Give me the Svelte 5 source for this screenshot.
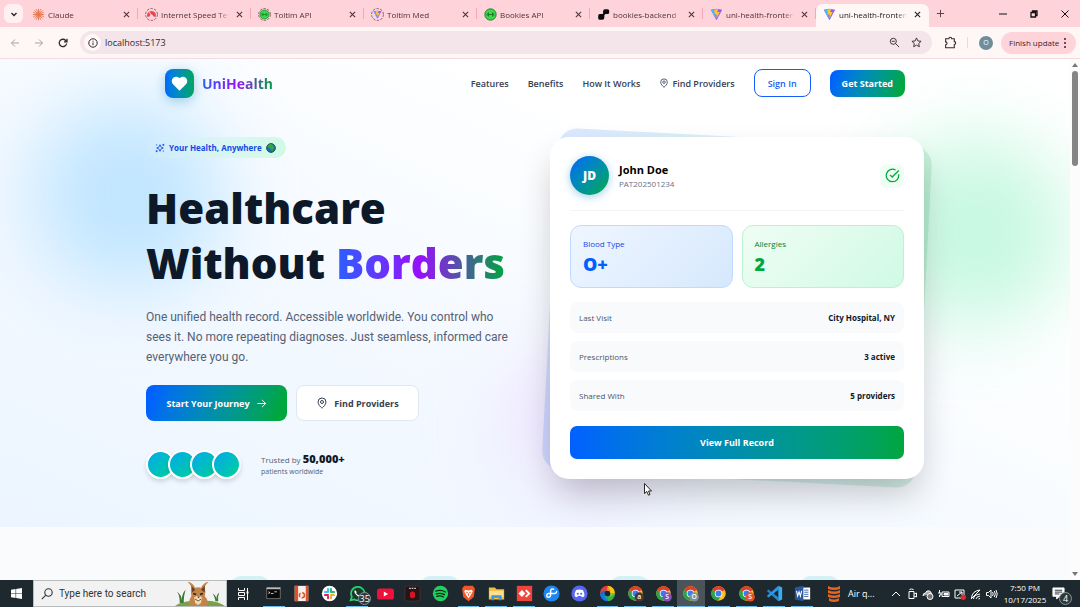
<script>
  const vite = '<path d="M1 2 8 1l7 1-7 13z" fill="#8d5cf6"/><path d="M1 2 8 15 5 2z" fill="#45b8fb"/><path d="M5 2l5-1-1 4h3l-4 8 0-5H6z" fill="#ffc531"/>';
  const ring = '<circle cx="8" cy="8" r="7.3" fill="none" stroke="#6d4a50" stroke-width="1" stroke-dasharray="3 1.6"/>';
  const bookies = '<circle cx="8" cy="8" r="7" fill="#39d94a" stroke="#1c6b2c" stroke-width="1"/><path d="M5.500 5.500v5M4 6.500v3M10.500 5.500v5M12 6.500v3M5.500 8h5" stroke="#174f22" stroke-width=".8"/>';
  const tabs = [
    { title: 'Claude', icon: '<path d="M8 1v14M1 8h14M3 3l10 10M13 3 3 13M5.3 1.5l5.4 13M1.5 5.3l13 5.4M14.5 5.3l-13 5.4M10.7 1.5l-5.4 13" stroke="#e5764f" stroke-width="1.1"/>' },
    { title: 'Internet Speed Test', icon: ring + '<path d="M3 11a5.400 5.400 0 1 1 10 0l-3-1a2 2 0 0 0-4 0z" fill="#ee4450"/><path d="M8 10 5.500 5" stroke="#fff" stroke-width="1"/>' },
    { title: 'Toltim API', icon: ring + '<g transform="translate(1.6 1.6) scale(.8)">' + bookies + '</g>' },
    { title: 'Toltim Med', icon: ring + '<g transform="translate(2.4 2.6) scale(.7)">' + vite + '</g>' },
    { title: 'Bookies API', icon: bookies },
    { title: 'bookies-backend', icon: '<path d="M1.500 9.500q0-2 2-2H6q1.500 0 1.500-1.500V4q0-2.500 2.500-2.500h3q2 0 2 2v2q0 2-2 2h-2q-2 0-2 2V12q0 2.500-2.500 2.500h-3q-2 0-2-2z" fill="#0b0b0d"/>' },
    { title: 'uni-health-frontend', icon: vite },
    { title: 'uni-health-frontend', icon: vite, active: true }
  ];

  const chrome = (color, letter) =>
    '<circle cx="10" cy="10" r="8.500" fill="#fbc116"/><path d="M10 10 2.600 5.800A8.500 8.500 0 0 1 17.400 5.800z" fill="#e33b2e"/><path d="M10 10 2.600 5.800A8.500 8.500 0 0 0 9.500 18.500L13 12z" fill="#2ba24c"/><circle cx="10" cy="10" r="4.400" fill="#fff"/><circle cx="10" cy="10" r="3.500" fill="#3b7ded"/>' +
    (letter ? `<circle cx="14.400" cy="14" r="5.400" fill="${color}"/><text x="14.400" y="16.700" font-size="8" font-weight="600" fill="#fff" text-anchor="middle">${letter}</text>` : '');

  const apps = [
    { name: 'Terminal', open: true, icon: '<path d="M2 3h16v13H2z" fill="#0a0a0a" stroke="#777"/><path d="M2 3h16v2H2z" fill="#bbb"/><path d="M4 8l2 1-2 1M7 10h3M11 8h3" stroke="#ddd" fill="none"/>' },
    { name: 'Presenter', icon: '<path d="M2 1h16v18H2z" fill="#f7efe9"/><path d="M2 1h4v18H2zM15 1h3v18h-3z" fill="#d9532c"/><circle cx="10.500" cy="12" r="3" fill="none" stroke="#d9532c" stroke-width="1.800" stroke-dasharray="5 2"/>' },
    { name: 'Slack', icon: '<circle cx="10" cy="10" r="9" fill="#fff"/><g stroke-width="2.4" stroke-linecap="round"><path d="M8.3 4.7v3.6M4.7 8.3h2" stroke="#36c5f0"/><path d="M11.7 4.7v3.6M13.4 8.3h2" stroke="#2eb67d"/><path d="M11.7 11.7h3.6M11.7 13.7v2" stroke="#ecb22e"/><path d="M4.7 11.7h3.6M8.3 13.5v2" stroke="#e01e5a"/></g>' },
    { name: 'WhatsApp', open: true, icon: '<path d="M2 18l1.3-4.2A8 8 0 1 1 6.3 17z" fill="#173b2c" stroke="#2bd36a" stroke-width="2"/><path d="M7 6q-2 3 2 6 3 3 5 1l-1.6-1.6-1.4.8-2.6-2.6.6-1.4z" fill="#fff"/>', badge: '35' },
    { name: 'YouTube', icon: '<rect x="0" y="4" width="20" height="13" rx="3" fill="#f0103c"/><path d="M8 7.500v6l5-3z" fill="#fff"/>' },
    { name: 'Recorder', icon: '<rect x="1" y="1" width="18" height="18" rx="3" fill="#241517" stroke="#4b3336"/><path d="M7 9q3-3 6 0v5q-3 3-6 0z" fill="#d51523"/><path d="M6 4h8" stroke="#d4c8c8" stroke-width="1.400" stroke-dasharray="2 1"/>' },
    { name: 'Spotify', icon: '<circle cx="10" cy="10" r="9" fill="#1fd15e"/><path d="M4.5 7.2q6-2 11.3 1M5 10.4q5-1.6 9.6 1M5.8 13.3q4-1.2 7.6.8" fill="none" stroke="#0d2415" stroke-width="1.6" stroke-linecap="round"/>' },
    { name: 'Brave', open: true, icon: '<path d="M5 1h10l2.500 3-1.300 10L10 19l-6.200-5L2.500 4z" fill="#f4552a"/><path d="M6 5.500l4 1 4-1 1 2-2 4-3 4-3-4-2-4z" fill="#fff"/><path d="M7.500 8.500l1.500.8M12.500 8.500 11 9.300M10 10v2.500" stroke="#f4552a" stroke-width="1.300"/>' },
    { name: 'File Explorer', open: true, icon: '<path d="M1 3h7l2 2h9v12H1z" fill="#f3bd45"/><path d="M2 7h16v7H2z" fill="#ffe08c"/><path d="M4 18v-6h12v6h-3v-3H7v3z" fill="#3c97dd"/>' },
    { name: 'AnyDesk', open: true, icon: '<path d="M1 1h18v18H1z" fill="#ef443b"/><path d="M7 6l4 4-4 4-4-4z" fill="#fff"/><path d="M11.500 6l4 4-4 4" fill="none" stroke="#fff" stroke-width="2.200"/>' },
    { name: 'Notes', icon: '<circle cx="10" cy="10" r="9.500" fill="#1d86f0"/><path d="M12.500 5q-3.500-1.500-3.500 2v4q0 3.500-2.500 3.500t-2-2.500 2.500-2h7q2-.5 2-2.500" fill="none" stroke="#fff" stroke-width="1.700" stroke-linecap="round"/>' },
    { name: 'Discord', icon: '<circle cx="10" cy="10" r="9.500" fill="#5865f2"/><path d="M6 6q4-1.500 8 0 2 3 1.800 7-1.500 1.500-3 1.500l-.8-1.500H8l-.8 1.500q-1.500 0-3-1.500Q4 9 6 6z" fill="#fff"/><circle cx="8" cy="10.300" r="1.300" fill="#5865f2"/><circle cx="12" cy="10.300" r="1.300" fill="#5865f2"/>' },
    { name: 'Photos', open: true, icon: '<path d="M10 1a9 9 0 0 1 9 9h-6z" fill="#f8c51d"/><path d="M19 10a9 9 0 0 1-9 9v-6z" fill="#37b24a"/><path d="M10 19a9 9 0 0 1-9-9h6z" fill="#1d74d8"/><path d="M1 10a9 9 0 0 1 9-9v6z" fill="#e43f30"/><path d="M10 1l4 6-5 1z" fill="#f59322"/><path d="M19 10l-6 4v-5z" fill="#8ac63f"/><path d="M10 19l-4-6 5-1z" fill="#1aa7a0"/><path d="M1 10l6-4v5z" fill="#2f62c9"/><circle cx="10" cy="10" r="3.200" fill="#18262b"/>' },
    { name: 'Chrome profile a', open: true, icon: chrome('#4d3631', 'a') },
    { name: 'Chrome profile S', open: true, icon: chrome('#7e51bd', 'S') },
    { name: 'Chrome profile O', open: true, current: true, icon: chrome('#78909c', 'O') },
    { name: 'Chrome', open: true, icon: chrome('', '') },
    { name: 'Chrome second profile S', open: true, icon: chrome('#ef5022', 'S') },
    { name: 'Visual Studio Code', open: true, icon: '<path d="M14.500 1v18L1 7l2-1.700 11.500 9z" fill="#1f86cf"/><path d="M14.500 1v4.700L3 14.700 1 13z" fill="#2a9ae6"/><path d="M14.500 1 19 3v14l-4.500 2z" fill="#37aef2"/>' },
    { name: 'Word', open: true, icon: '<path d="M10 3h9v14h-9z" fill="#fff"/><path d="M12 6h5M12 8.500h5M12 11h5M12 13.500h5" stroke="#2b579a"/><path d="M1 3l10-2v18L1 17z" fill="#2b579a"/><path d="M3 7l1.300 6L6 8l1.500 5L9 7" stroke="#fff" stroke-width="1.300" fill="none"/>' }
  ];

  const links = ['Features', 'Benefits', 'How It Works'];
  const records = [
    ['Last Visit', 'City Hospital, NY'],
    ['Prescriptions', '3 active'],
    ['Shared With', '5 providers']
  ];
</script>

{#snippet pin()}
  <svg class="pin" viewBox="0 0 24 24"><path d="M20 10c0 5-5.500 10.200-7.400 11.800a1 1 0 0 1-1.200 0C9.500 20.200 4 15 4 10a8 8 0 0 1 16 0z" /><circle cx="12" cy="10" r="3" /></svg>
{/snippet}

{#snippet cross()}
  <svg class="cross" viewBox="0 0 8 8"><path d="M1 1l6 6M7 1 1 7" /></svg>
{/snippet}

<div class="desktop">
  <div class="tabstrip">
    <button class="tab-search" aria-label="Search tabs"><svg viewBox="0 0 8 8"><path d="M1.500 3 4 5.500 6.500 3" /></svg></button>
    <div class="tabs">
      {#each tabs as tab}
        <div class="tab" class:active={tab.active}>
          <svg class="favicon" viewBox="0 0 16 16">{@html tab.icon}</svg>
          <span class="tab-title">{tab.title}</span>
          <button class="plain" aria-label="Close tab">{@render cross()}</button>
        </div>
      {/each}
    </div>
    <button class="plain new-tab" aria-label="New tab"><svg viewBox="0 0 10 10"><path d="M5 1v8M1 5h8" /></svg></button>
    <div class="window-controls">
      <button class="plain" aria-label="Minimize"><svg viewBox="0 0 8 8"><path d="M0 4h8" /></svg></button>
      <button class="plain" aria-label="Restore"><svg viewBox="0 0 8 8"><path d="M1 2.500h4.500V7H1zM2.500 2V1H7v4.500H6" stroke-width="1.300" /></svg></button>
      <button class="plain" aria-label="Close"><svg viewBox="0 0 8 8"><path d="M.5.5l7 7M7.500.5l-7 7" /></svg></button>
    </div>
  </div>

  <div class="toolbar">
    <button class="plain faded" aria-label="Back"><svg viewBox="0 0 10 10"><path d="M9 5H1.500M5 1.500 1.500 5 5 8.500" /></svg></button>
    <button class="plain faded" aria-label="Forward"><svg viewBox="0 0 10 10"><path d="M1 5h7.500M5 1.500 8.500 5 5 8.500" /></svg></button>
    <button class="plain" aria-label="Reload"><svg viewBox="0 0 10 10"><path d="M8.600 5.500A3.700 3.700 0 1 1 7.700 2.500L9 3.700M9 .8v3H6" stroke-width="1.300" /></svg></button>
    <div class="omnibox">
      <span class="site-info"><svg viewBox="0 0 10 10"><circle cx="5" cy="5" r="4.200" /><path d="M5 4.500v2.700M5 2.700v1" /></svg></span>
      <input aria-label="Address" value="localhost:5173" />
      <svg class="tool" viewBox="0 0 12 12"><circle cx="4.700" cy="4.700" r="3.300" /><path d="M7.200 7.200 11 11M3 4.700h3.400" /></svg>
      <svg class="tool" viewBox="0 0 12 12"><path d="M6 1l1.500 3.300 3.500.4-2.600 2.400.7 3.500L6 8.900l-3.100 1.700.7-3.500L1 4.700l3.500-.4z" /></svg>
    </div>
    <button class="plain ext" aria-label="Extensions"><svg viewBox="0 0 12 12"><path d="M1.500 2.500h3a1.300 1.300 0 0 1 2.600 0h2.400v2.700a1.300 1.300 0 0 1 0 2.600v3h-8V8a1.200 1.200 0 0 0 0-2.600z" /></svg></button>
    <span class="split"></span>
    <button class="profile">O</button>
    <button class="update">Finish update <i></i></button>
  </div>

  <div class="viewport">
    <main>
      <section class="hero">
        <div class="blob sky"></div>
        <div class="blob mint"></div>
        <div class="blob violet"></div>
        <nav>
          <a class="brand" href="#home">
            <span class="logo"><svg viewBox="0 0 24 24"><path d="M12 21 3.500 12.600A5.500 5.500 0 0 1 12 5.500a5.500 5.500 0 0 1 8.500 7.100z" /></svg></span>
            <span class="gradient-text">UniHealth</span>
          </a>
          <div class="links">
            {#each links as link}<a href="#top">{link}</a>{/each}
            <a href="#providers">{@render pin()}Find Providers</a>
            <button class="sign-in">Sign In</button>
            <button class="get-started">Get Started</button>
          </div>
        </nav>

        <div class="columns">
          <div class="pitch">
            <div class="pill">
              <svg class="spark" viewBox="0 0 24 24"><path d="M12 4q.7 7.300 8 8-7.300.7-8 8-.7-7.300-8-8 7.300-.7 8-8zM20 2v5M17.500 4.500h5M4 17v5M1.500 19.500h5M4 3v3M20 18v3" /></svg>
              <span>Your Health, Anywhere</span>
              <svg class="globe" viewBox="0 0 12 12"><circle cx="6" cy="6" r="5.300" fill="#1675a8" stroke="#163b4f" /><path d="M3 2q3-1.500 5 0l1 2 1.500 1-2 2L8 10 6 8 5 6H3L2 4z" fill="#37a63d" /></svg>
            </div>
            <h1>Healthcare<br />Without <span class="gradient-text">Borders</span></h1>
            <p class="lead">One unified health record. Accessible worldwide. You control who sees it. No more repeating diagnoses. Just seamless, informed care everywhere you go.</p>
            <div class="actions">
              <button class="primary">Start Your Journey <svg viewBox="0 0 24 24"><path d="M3 12h18M13 4l8 8-8 8" /></svg></button>
              <button class="secondary">{@render pin()}Find Providers</button>
            </div>
            <div class="trust">
              <div class="people"><i></i><i></i><i></i><i></i></div>
              <div>
                <div class="trusted">Trusted by <strong>50,000+</strong></div>
                <div class="small">patients worldwide</div>
              </div>
            </div>
          </div>

          <div class="card-wrap">
            <div class="card-back"></div>
            <article class="card">
              <header>
                <span class="initials">JD</span>
                <div class="who">
                  <h2>John Doe</h2>
                  <div>PAT202501234</div>
                </div>
                <span class="verified"><svg viewBox="0 0 24 24"><path d="M21.800 10A10 10 0 1 1 17 3.300" /><path d="m8 11 3.500 3.500L22 4" /></svg></span>
              </header>
              <div class="stats">
                <div class="stat blue"><span>Blood Type</span><strong>O+</strong></div>
                <div class="stat green"><span>Allergies</span><strong>2</strong></div>
              </div>
              <dl>
                {#each records as [label, value]}
                  <div><dt>{label}</dt><dd>{value}</dd></div>
                {/each}
              </dl>
              <button class="full">View Full Record</button>
            </article>
          </div>
        </div>
      </section>
      <section class="numbers"><i></i><i></i><i></i><i></i></section>
    </main>
    <div class="scrollbar"><b class="up"></b><span></span><b class="down"></b></div>
  </div>

  <footer class="taskbar">
    <button class="start" aria-label="Start"><svg viewBox="0 0 12 12"><path d="M0 2l5-.8v4.500H0zM5.600 1.100 12 0v5.700H5.600zM0 6.300h5v4.500L0 10zM5.600 6.300H12V12l-6.400-1z" fill="#fff" /></svg></button>
    <label class="search">
      <svg class="lens" viewBox="0 0 12 12"><circle cx="7.500" cy="4.500" r="3.700" /><path d="M4.800 7.200.8 11.200" /></svg>
      <input placeholder="Type here to search" aria-label="Type here to search" />
      <svg class="caracal" viewBox="0 0 52 26">
        <path d="M0 26q8-6 24-5 18-2 28 5z" fill="#7da044" />
        <path d="M5 23q0-8-3-12 5 4 5 9 0-7 4-11-2 6-2 14zM42 21q-1-6-3-8 4 2 4 6 0-5 3-7-2 5-1 9z" fill="#3f7a39" />
        <path d="M15 26q-1-7 2-10-1-6 0-10-2-4-4-5 5 0 8 6 3-1 6 0 3-6 8-6-3 2-4 5 1 5 0 10 4 3 3 10z" fill="#c28449" />
        <path d="M17 5l4 4-3 3zM31 5l-4 4 4 3z" fill="#6b4026" />
        <path d="M20 17q4-3 8 0l-1 6-3 2-3-2z" fill="#f0d9b5" />
        <path d="M19 13l3 1M29 13l-3 1" stroke="#2f2119" stroke-width="1.500" /><path d="M23 16h3l-1.500 2z" fill="#643022" /><path d="M21 19q3.500 3 6 0" stroke="#69402b" fill="#fff" />
      </svg>
    </label>
    <button class="task-view" aria-label="Task view"><svg viewBox="0 0 12 12"><path d="M.5 0v2.500h6V0M.5 12V9.500h6V12M.5 4.500h6v3h-6zM9.500 0v12" /><path d="M8.500 4.500h2" stroke-width="2" /></svg></button>
    <div class="apps">
      {#each apps as app}
        <button class="app" class:open={app.open} class:current={app.current} aria-label={app.name}>
          <svg viewBox="0 0 20 20">{@html app.icon}</svg>
          {#if app.badge}<span class="badge">{app.badge}</span>{/if}
        </button>
      {/each}
    </div>
    <div class="tray">
      <svg class="air" viewBox="0 0 14 16"><path d="M1 0q6 3 12 0v3Q7 5 1 3zM1 4q6 3 12 0v3Q7 9 1 7zM1 8q6 3 12 0v3Q7 13 1 11zM2 12q5 3 10 0v3q-5 2-10 0z" fill="#e8641f" /></svg>
      <span class="air-text">Air q...</span>
      <svg viewBox="0 0 12 12"><path d="M2 8l4-4 4 4" /></svg>
      <svg viewBox="0 0 12 12"><path d="M3 3.500h5v7H3zM8 6l2.500-1v4L8 8M3.500 1.500q2-1 4 0" /></svg>
      <svg viewBox="0 0 12 12"><path d="M1 8q0-3 2.500-3 1-3 4-2 2 1 2 3" fill="#aaa" /><circle cx="8" cy="8.500" r="3" fill="#777" /></svg>
      <svg viewBox="0 0 12 12"><path d="M4 4h7v4.500H4zM1.500 2v3M0 5h3v2H1.500v2" /><path d="M6 5.500h4v1.500H6z" fill="#eee" /></svg>
      <svg viewBox="0 0 12 12"><path d="M1 2h9v8H1zM3 8l5-4M5 4h3v3" /><circle cx="9.300" cy="9.300" r="2.700" fill="#e8252c" stroke="none" /></svg>
      <svg viewBox="0 0 12 12"><path d="M1 11 10 2M3.500 11q0-4 6.500-5M6 11q0-2 4-3M1.500 10Q2 3 10 2M8.500 11l1.500-.5" /></svg>
      <svg viewBox="0 0 12 12"><path d="M.5 4.500h2L5 2v8L2.500 7.500h-2zM6.500 4q1.500 2 0 4M8.300 3q2 3 0 6M10 2q2.500 4 0 8" /></svg>
      <div class="clock"><span>7:50 PM</span><span>10/17/2025</span></div>
      <button class="notice" aria-label="Notifications"><svg viewBox="0 0 14 14"><path d="M1 1h12v9H8l-3 3v-3H1z" fill="#fff" /><path d="M3 3.500h8M3 5.500h8M3 7.500h5" stroke="#1d292e" /></svg><span class="badge">4</span></button>
    </div>
  </footer>

  <svg class="cursor" viewBox="0 0 8 13"><path d="M.5.5v10l2.300-2 1.700 3.700 1.500-.7L4.500 8h3z" fill="#fff" stroke="#111" stroke-width=".9" /></svg>
</div>

<style>
  :global(body) { margin: 0; }
  .desktop { display: flex; flex-direction: column; height: 100vh; overflow: hidden; position: relative; font-family: "Open Sans", "Noto Sans", sans-serif; font-size: 9px; color: #000; --brand: linear-gradient(90deg in oklab, #0060ff, #00a63e); --brand-tilt: linear-gradient(110deg in oklab, #0060ff 5%, #00a63e 92%); }
  .desktop :global(*) { box-sizing: border-box; }
  button, input { font: inherit; color: inherit; border: 0; padding: 0; margin: 0; background: none; }
  a { color: inherit; text-decoration: none; }
  svg { fill: none; stroke: currentColor; flex: none; display: block; }
  .favicon, .app svg, .caracal, .start svg, .air, .globe { stroke: none; }
  .plain { display: grid; place-items: center; flex: none; }

  .tabstrip { display: flex; align-items: stretch; height: 27px; flex: none; background: #ffd3da; color: #4a3439; padding-left: 4px; }
  .tab-search { align-self: center; width: 19px; height: 19px; border-radius: 6px; background: #fff0f1; display: grid; place-items: center; margin-right: 2px; color: #222; }
  .tab-search svg { width: 8px; stroke-width: 1.3; }
  .tabs { display: flex; flex: 0 1 904px; min-width: 0; padding-top: 4px; }
  .tab { flex: 1; min-width: 0; display: flex; align-items: center; gap: 3px; padding: 0 8px 3px 7px; position: relative; font-size: 8px; }
  .tab:not(.active)::after { content: ""; position: absolute; right: 0; top: 4px; width: 1px; height: 11px; background: #f3a9b5; }
  .tab.active { background: #fff7f6; border-radius: 7px 7px 0 0; color: #1f1a1b; }
  .favicon { width: 13px; height: 13px; }
  .tab-title { flex: 1; overflow: hidden; white-space: nowrap; mask-image: linear-gradient(90deg, #000 85%, transparent); }
  .tab .plain { width: 8px; margin-left: 3px; }
  .cross { width: 7px; height: 7px; stroke-width: 1.2; }
  .new-tab { width: 23px; }
  .new-tab svg { width: 9px; }
  .window-controls { margin-left: auto; display: flex; }
  .window-controls .plain { width: 31px; color: #111; }
  .window-controls svg { width: 8px; }

  .toolbar { display: flex; align-items: center; height: 32px; flex: none; background: #fff7f6; border-bottom: 1px solid #f3dbe0; padding: 0 4px 0 8px; color: #33292b; }
  .toolbar > .plain { width: 14px; margin-right: 10px; }
  .toolbar > .plain svg { width: 10px; }
  .toolbar > .faded { color: #aaa0a2; }
  .omnibox { flex: 1; min-width: 0; height: 23px; border-radius: 12px; background: #f3e5ea; display: flex; align-items: center; gap: 11px; padding: 0 10px 0 4px; }
  .site-info { width: 17px; height: 17px; border-radius: 50%; background: #fff7f8; display: grid; place-items: center; }
  .site-info svg { width: 10px; }
  .omnibox input { flex: 1; min-width: 0; margin-left: -7px; outline: 0; }
  .tool { width: 11px; height: 11px; }
  .toolbar > .ext { margin: 0 10px 0 11px; }
  .toolbar > .ext svg { width: 13px; }
  .split { width: 1px; height: 11px; background: #f6d3d9; margin-right: 11px; }
  .profile { width: 14px; height: 14px; border-radius: 50%; background: #6f8d9a; color: #fff; font-size: 7px; margin-right: 8px; line-height: 14px; }
  .update { display: flex; align-items: center; justify-content: space-between; width: 75px; height: 22px; border-radius: 11px; background: #ffd3da; font-size: 8px; font-weight: 500; padding: 0 10px 0 8px; white-space: nowrap; color: #3c1f25; }
  .update i { width: 2px; height: 2px; border-radius: 50%; background: #3c1f25; box-shadow: 0 -4px #3c1f25, 0 4px #3c1f25; }

  .viewport { flex: 1; min-height: 0; display: flex; background: #f9fbfc; }
  main { flex: 1; min-width: 0; overflow: hidden; }
  .hero { position: relative; overflow: hidden; background: linear-gradient(25deg, #ecf5ff 0%, #f4f9ff 40%, #fff 72%); padding: 9px 24px 48px; }
  .blob { position: absolute; border-radius: 50%; filter: blur(40px); }
  .sky { left: 3%; top: 40px; width: 190px; height: 190px; background: #a4dbff; opacity: .65; }
  .mint { right: 0; top: 78px; width: 190px; height: 190px; background: #a4f4cf; opacity: .62; }
  .violet { left: 47%; top: 290px; width: 170px; height: 150px; background: #e9d0ff; opacity: .5; }
  nav { position: relative; max-width: 740px; margin: 0 auto; display: flex; align-items: center; justify-content: space-between; height: 30px; }
  .brand { display: flex; align-items: center; gap: 8px; font-size: 14px; font-weight: 700; }
  .logo { width: 29px; height: 29px; border-radius: 8px; background: linear-gradient(90deg in oklab, #0868ff, #00a558); display: grid; place-items: center; box-shadow: 0 3px 12px #2b8fc966; }
  .logo svg { width: 19px; fill: #fff; stroke: none; }
  .gradient-text { background: linear-gradient(90deg, #2b60ff, #9810fa 50%, #00a63e); background-clip: text; color: transparent; }
  .links { display: flex; align-items: center; gap: 19px; font-size: 9px; font-weight: 600; color: #364153; white-space: nowrap; }
  .links a { display: flex; align-items: center; gap: 3px; }
  .pin { width: 10px; height: 10px; stroke-width: 2; }
  .sign-in { height: 28px; padding: 0 13px; border: 1px solid #155dfc; border-radius: 8px; background: #fff; color: #155dfc; }
  .get-started { height: 27px; padding: 0 12px; border-radius: 8px; background: var(--brand-tilt); color: #fff; font-weight: 700; }

  .columns { position: relative; max-width: 778px; margin: 39px auto 0; display: grid; grid-template-columns: minmax(0, 1fr) minmax(0, 1fr); gap: 30px; align-items: start; }
  .pill { display: flex; width: max-content; align-items: center; gap: 4px; height: 21px; padding: 0 10px 0 9px; border-radius: 11px; background: linear-gradient(90deg, #dbeafe40, #d0fae5); color: #1447e6; font-size: 8px; font-weight: 700; }
  .spark { width: 10px; height: 10px; stroke-width: 2; }
  .globe { width: 10px; height: 10px; }
  h1 { margin: 22px 0 0; font-size: 42px; line-height: 55px; font-weight: 800; color: #0d1828; white-space: nowrap; }
  .lead { margin: 17px 0 0; font-family: Roboto, "Open Sans", sans-serif; font-size: 12px; line-height: 20px; color: #566173; }
  .actions { display: flex; gap: 9px; margin-top: 18px; }
  .actions button { height: 36px; border-radius: 8px; display: flex; align-items: center; justify-content: center; gap: 6px; font-size: 9px; font-weight: 700; white-space: nowrap; }
  .primary { width: 141px; color: #fff; background: var(--brand-tilt); }
  .primary svg { width: 11px; stroke-width: 2; }
  .secondary { width: 123px; color: #364153; background: #fff; }
  .actions .secondary { border: 1px solid #e1e7ef; }
  .secondary .pin { width: 12px; height: 12px; }
  .trust { display: flex; align-items: center; gap: 20px; margin-top: 29px; color: #566173; }
  .people { display: flex; }
  .people i { width: 29px; height: 29px; border-radius: 50%; border: 2px solid #fff; background: linear-gradient(135deg, #00a6f4, #00d492); background-origin: border-box; box-shadow: 0 3px 5px #0002; }
  .people i + i { margin-left: -7px; }
  .trusted { font-size: 8px; line-height: 14px; }
  .trusted strong { color: #101828; font-size: 11px; font-weight: 800; }
  .small { font-size: 7px; line-height: 10px; }

  .card-wrap { position: relative; }
  .card-back { position: absolute; inset: 0; border-radius: 19px; transform: rotate(3deg); background: var(--brand); opacity: .14; }
  .card { position: relative; background: #fff; border-radius: 19px; padding: 19px 20px 20px; box-shadow: 0 18px 36px -6px #0000003d; }
  .card header { display: flex; align-items: center; gap: 10px; padding-bottom: 15px; border-bottom: 1px solid #f3f4f6; }
  .initials { width: 39px; height: 39px; border-radius: 50%; background: linear-gradient(135deg in oklab, #0060ff, #00a63e); color: #fff; display: grid; place-items: center; font-size: 12px; font-weight: 800; box-shadow: 0 2px 8px #1389c966; }
  .who { flex: 1; font-size: 8px; line-height: 12px; color: #6a7282; }
  h2 { margin: 0; font-size: 11px; line-height: 16px; font-weight: 700; color: #000; }
  .verified { width: 24px; height: 24px; border-radius: 7px; background: #f0fdf4; color: #00a63e; display: grid; place-items: center; }
  .verified svg { width: 15px; stroke-width: 2; }
  .stats { display: grid; grid-template-columns: 1fr 1fr; gap: 9px; margin-top: 14px; }
  .stat { height: 63px; border: 1px solid; border-radius: 11px; padding: 10px 12px; display: flex; flex-direction: column; }
  .stat span { font-size: 8px; line-height: 16px; font-weight: 500; }
  .stat strong { font-size: 18px; line-height: 24px; font-weight: 800; }
  .blue { background: linear-gradient(135deg, #eff6ff, #d6e8fd); border-color: #bedbff; color: #0060ff; }
  .blue span { color: #1447e6; }
  .green { background: linear-gradient(135deg, #effdf4, #d0fae5); border-color: #b9f3cf; color: #00a63e; }
  .green span { color: #008236; }
  dl { margin: 14px 0 15px; display: grid; gap: 8px; }
  dl div { display: flex; align-items: center; justify-content: space-between; height: 31px; padding: 0 9px; border-radius: 8px; background: #f9fafb; font-size: 8px; }
  dt { color: #4a5565; font-weight: 500; }
  dd { margin: 0; color: #101828; font-weight: 700; }
  .full { display: block; width: 100%; height: 33px; border-radius: 7px; background: var(--brand); color: #fff; font-size: 9px; font-weight: 700; }
  .numbers { max-width: 740px; margin: 0 auto; padding-top: 49px; display: grid; grid-template-columns: repeat(4, 1fr); gap: 19px; justify-items: center; }
  .numbers i { width: 38px; height: 38px; border-radius: 9px; background: #d4f1f5; }
  .scrollbar { flex: none; width: 10px; background: #fcfcfc; display: flex; flex-direction: column; align-items: center; padding: 4px 0; }
  .scrollbar span { width: 6px; height: 95px; border-radius: 3px; background: #858585; margin: 4px 0 auto; }
  .scrollbar b { border: 3px solid transparent; }
  .scrollbar .up { border-top: 0; border-bottom: 4px solid #777; }
  .scrollbar .down { border-bottom: 0; border-top: 4px solid #777; }

  .taskbar { flex: none; height: 27px; display: flex; background: #1d292e; color: #fff; }
  .start { width: 33px; display: grid; place-items: center; }
  .start svg { width: 11px; }
  .search { width: 194px; flex: none; display: flex; align-items: center; background: #f2f2f2; border: 1px solid #b9bcbd; color: #333; padding-left: 7px; }
  .lens { width: 12px; margin-right: 6px; stroke-width: 1.1; }
  .search input { flex: 1; min-width: 0; font-family: Roboto, "Open Sans", sans-serif; font-size: 10px; outline: 0; }
  .search input::placeholder { color: #333; opacity: 1; }
  .caracal { width: 52px; height: 25px; }
  .task-view { width: 33px; display: grid; place-items: center; }
  .task-view svg { width: 12px; }
  .apps { flex: 1 1 0; display: flex; min-width: 0; }
  .app { flex: 1 1 0; min-width: 0; display: grid; place-items: center; position: relative; }
  .app svg { width: 17px; height: 17px; }
  .open::after { content: ""; position: absolute; left: 3px; right: 3px; bottom: 0; height: 1px; background: #6bb8ee; }
  .current { background: #4b5559; }
  .current::after { left: 0; right: 0; }
  .badge { position: absolute; right: 0; bottom: 2px; min-width: 13px; height: 13px; border-radius: 7px; background: #2d383c; border: 1px solid #8b9396; font-size: 9px; line-height: 11px; text-align: center; }
  .tray { flex: none; width: 264px; display: flex; align-items: center; padding-left: 11px; }
  .tray > svg { width: 12px; margin-right: 4px; }
  .tray > .air { width: 14px; margin-right: 7px; }
  .air-text { width: 42px; font-size: 9px; }
  .clock { width: 46px; display: flex; flex-direction: column; align-items: center; font-size: 8px; line-height: 12px; }
  .notice { position: relative; width: 28px; height: 27px; display: grid; place-items: center start; }
  .notice svg { width: 13px; margin-left: 4px; }
  .notice .badge { right: 4px; }
  .cursor { position: absolute; left: 644px; top: 483px; width: 8px; height: 13px; }
</style>
